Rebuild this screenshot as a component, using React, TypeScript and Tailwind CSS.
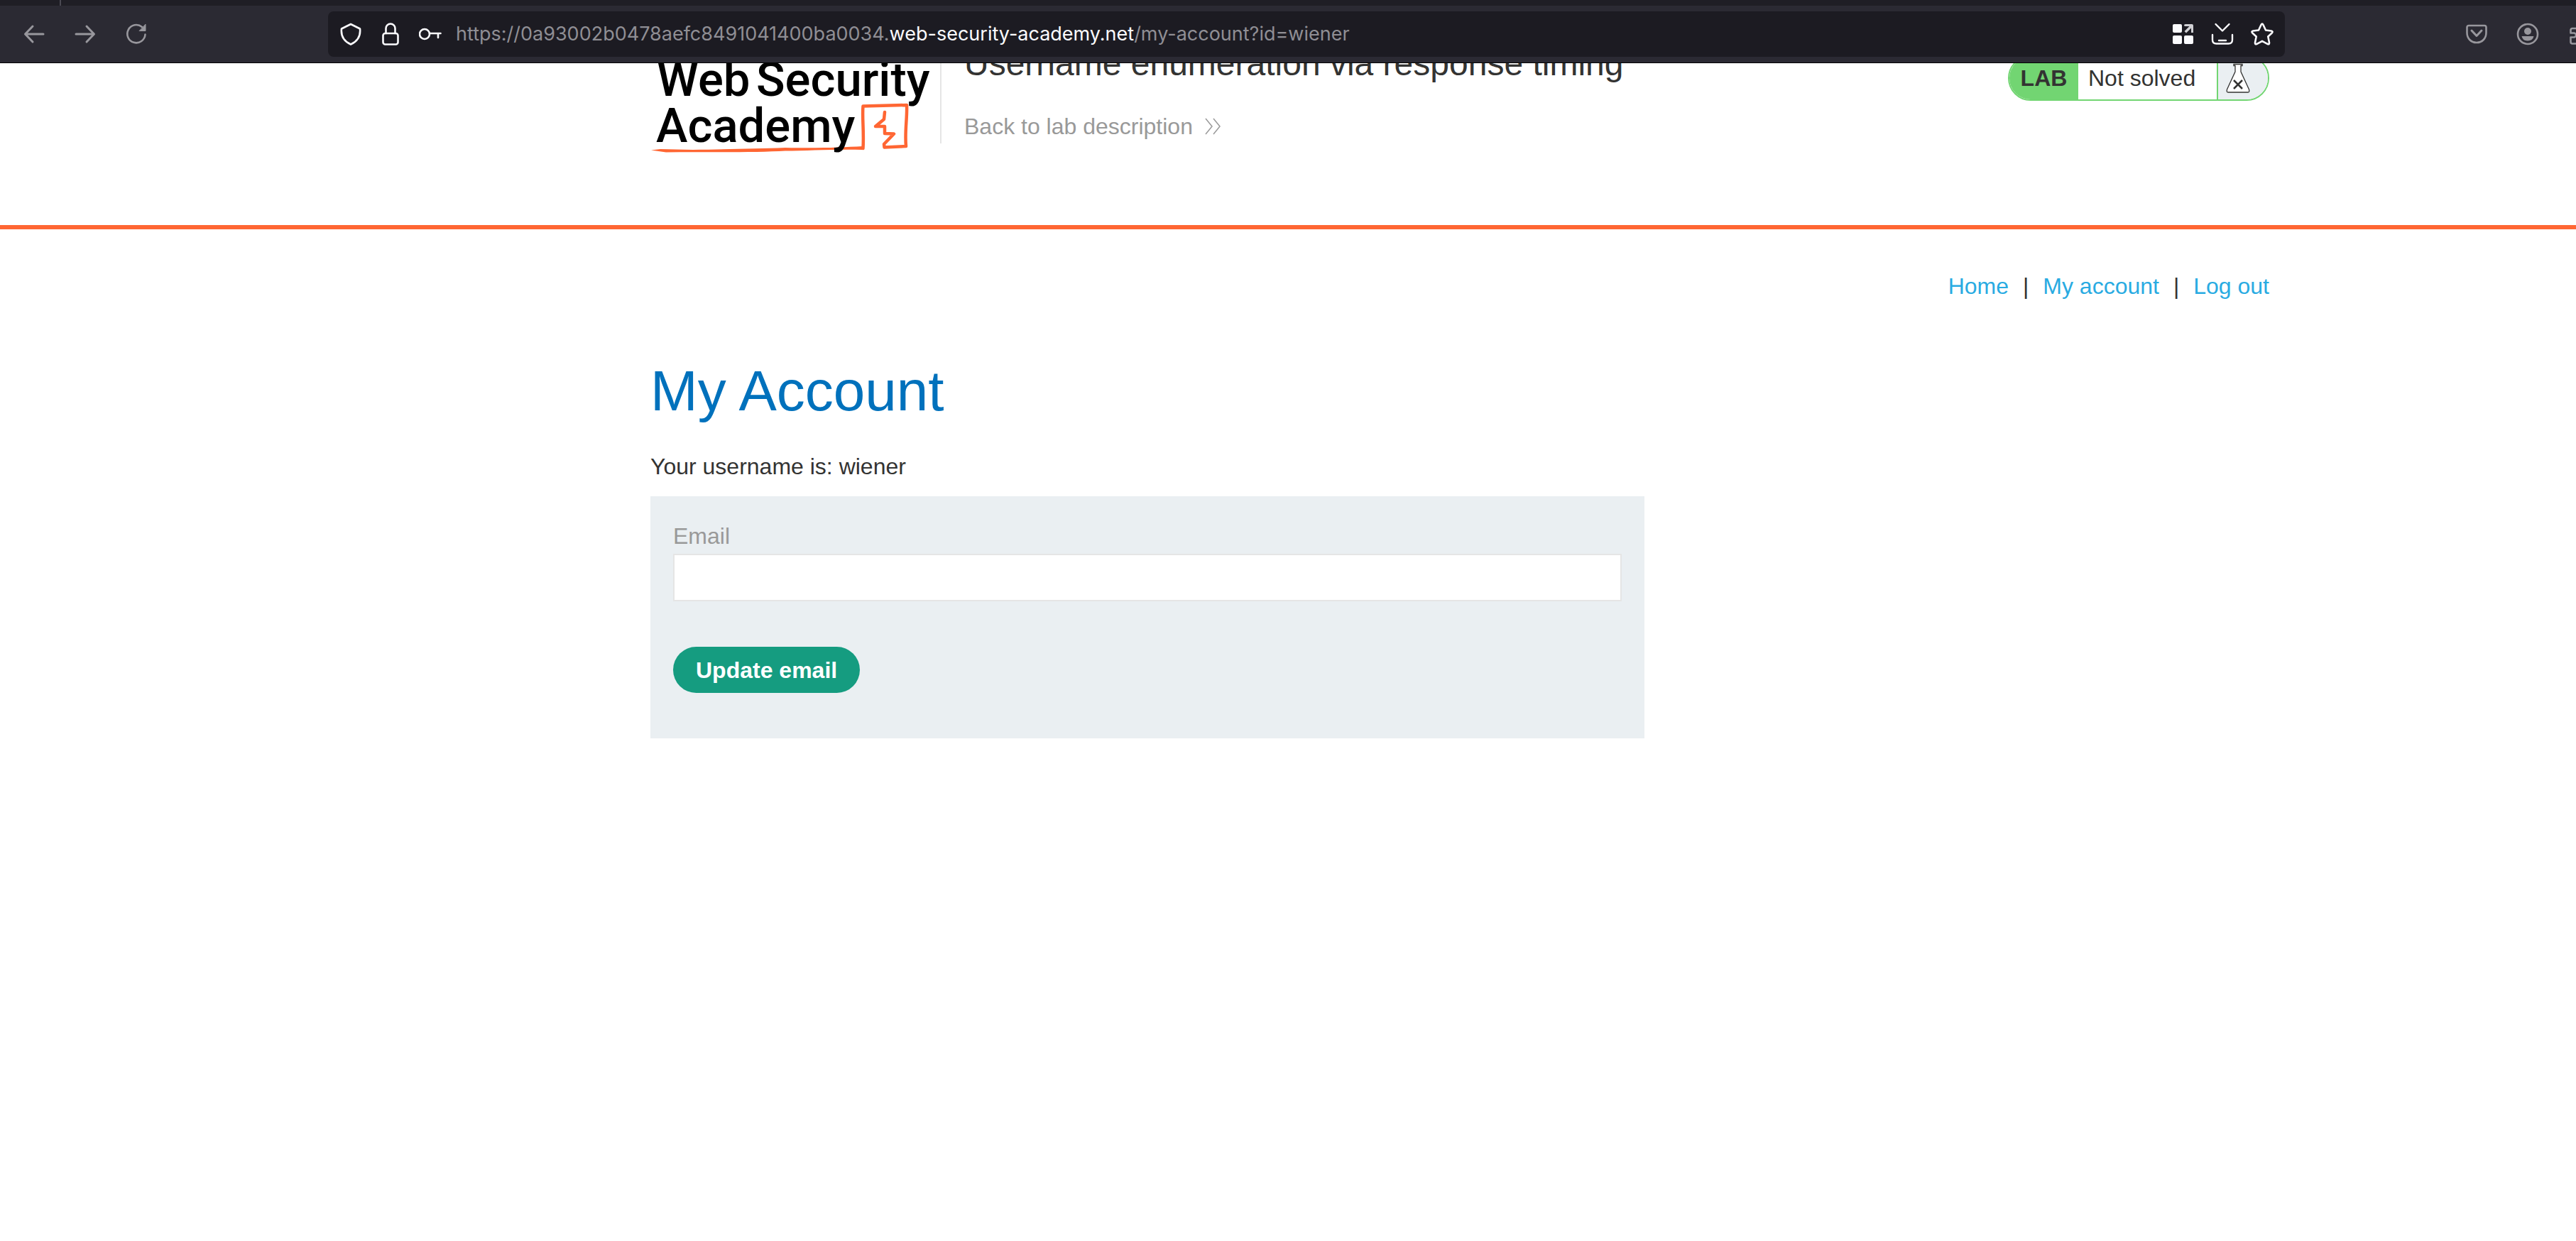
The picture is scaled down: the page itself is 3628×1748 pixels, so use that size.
import React from "react";

const ui = { fontFamily: '"Liberation Sans", Arial, sans-serif' };

function ToolButton({ label, children }: { label: string; children: React.ReactNode }) {
  return (
    <button type="button" aria-label={label} className="flex h-8 w-8 shrink-0 items-center justify-center">
      {children}
    </button>
  );
}

const line = { fill: "none", stroke: "currentColor", strokeLinecap: "round", strokeLinejoin: "round" } as const;

function BrowserBar() {
  return (
    <header className="shrink-0">
      <div className="flex h-2 bg-[#1f1e25]">
        <div className="ml-[84px] h-full w-[2px] bg-[#4a4952]" />
      </div>
      <div className="flex h-[81px] items-center border-b border-black bg-[#2b2a33] text-[#98979d]">
        <div className="flex w-[462px] shrink-0 items-center gap-10 pl-8">
          <ToolButton label="Back">
            <svg viewBox="0 0 32 32" className="h-8 w-8" {...line} strokeWidth="3">
              <path d="M29 16H4M14 5L3.500 16L14 27" />
            </svg>
          </ToolButton>
          <ToolButton label="Forward">
            <svg viewBox="0 0 32 32" className="h-8 w-8" {...line} strokeWidth="3">
              <path d="M3 16H28M18 5L28.500 16L18 27" />
            </svg>
          </ToolButton>
          <ToolButton label="Reload">
            <svg viewBox="0 0 32 32" className="h-8 w-8" {...line} strokeWidth="2.600">
              <path d="M28.500 16.500A12.600 12.600 0 1 1 24 6" />
              <path d="M29 2.500V11.500H20.500Z" fill="currentColor" strokeWidth="1" />
            </svg>
          </ToolButton>
        </div>
        <div className="flex h-16 flex-1 items-center rounded-lg bg-[#1c1b22] pr-4 pl-4 text-[#fbfbfe]">
          <div className="flex shrink-0 items-center gap-6">
            <ToolButton label="Tracking protection">
              <svg viewBox="0 0 32 32" className="h-8 w-8" {...line} strokeWidth="2.600">
                <path d="M16 2L29 8.500C30 18 26 26 16 30.500C6 26 2 18 3 8.500Z" />
              </svg>
            </ToolButton>
            <ToolButton label="Site security">
              <svg viewBox="0 0 32 32" className="h-8 w-8" {...line} strokeWidth="2.600">
                <rect x="5.500" y="15" width="21" height="15.500" rx="3" />
                <path d="M9.500 15V8A6.500 6.500 0 0 1 22.500 8V15" />
              </svg>
            </ToolButton>
            <ToolButton label="Saved password">
              <svg viewBox="0 0 32 32" className="h-8 w-8" {...line} strokeWidth="2.600">
                <circle cx="8" cy="16" r="7" />
                <path d="M15 15H30.500M27 15V21" />
              </svg>
            </ToolButton>
          </div>
          <p
            className="ml-5 flex-1 text-[27px] leading-10 whitespace-nowrap text-[#8f8e94]"
            style={{ fontFamily: "Inter, sans-serif" }}
          >
            https://0a93002b0478aefc8491041400ba0034.
            <span className="text-[#fbfbfe]">web-security-academy.net</span>
            /my-account?id=wiener
          </p>
          <div className="flex shrink-0 items-center gap-6">
            <ToolButton label="Add-ons">
              <svg viewBox="0 0 32 32" className="h-8 w-8" fill="currentColor">
                <rect x="2" y="2" width="13" height="12" rx="2" />
                <rect x="2" y="18" width="13" height="12" rx="2" />
                <rect x="18" y="18" width="13" height="12" rx="2" />
                <path d="M20 2H29Q31 2 31 4V14H28V7.500L21 14.500L18.500 12L25.500 5H20Q18 5 18 3.500Q18 2 20 2Z" fill="#d0d0d4" />
              </svg>
            </ToolButton>
            <ToolButton label="Save page">
              <svg viewBox="0 0 32 32" className="h-8 w-8" {...line} strokeWidth="2.400">
                <path d="M6.500 2L16 11.500L25.500 2M2 17V24Q2 29.500 7.500 29.500H24.500Q30 29.500 30 24V17M11 25H21" />
              </svg>
            </ToolButton>
            <ToolButton label="Bookmark">
              <svg viewBox="0 0 32 32" className="h-8 w-8" {...line} strokeWidth="2.600">
                <path d="M14.500 3Q16 0 17.500 3L21 10.500L28.800 11.500Q31.800 12 29.700 14.500L24.300 19.500L26 28Q26.300 31.200 23.300 29.800L16 25.800L8.700 29.800Q5.700 31.200 6 28L7.700 19.500L2.300 14.500Q0.200 12 3.200 11.500L11 10.500Z" />
              </svg>
            </ToolButton>
          </div>
        </div>
        <div className="flex w-[410px] shrink-0 items-center justify-end gap-10 overflow-hidden">
          <ToolButton label="Pocket">
            <svg viewBox="0 0 32 32" className="h-8 w-8" {...line} strokeWidth="2.600">
              <path d="M5 4H27Q29.500 4 29.500 6.500V14C29.500 22 24 28 16 28C8 28 2.500 22 2.500 14V6.500Q2.500 4 5 4Z" />
              <path d="M9 11L16 18.500L23 11" strokeWidth="3" />
            </svg>
          </ToolButton>
          <ToolButton label="Account">
            <svg viewBox="0 0 32 32" className="h-8 w-8" fill="currentColor">
              <circle cx="16" cy="16" r="14" fill="none" stroke="currentColor" strokeWidth="2.600" />
              <circle cx="16" cy="12" r="5" />
              <path d="M7.500 19H24.500Q23 25.500 16 25.500Q9 25.500 7.500 19Z" />
            </svg>
          </ToolButton>
          <button type="button" aria-label="Extensions" className="h-8 w-3 shrink-0 overflow-hidden">
            <svg viewBox="0 0 12 32" className="h-8 w-3" {...line} strokeWidth="2.600">
              <path d="M16 8H7Q4.500 8 4.500 10.500V14.500H9A3 3 0 0 1 9 20.500H4.500V27Q4.500 29.500 7 29.500H16" />
            </svg>
          </button>
        </div>
      </div>
    </header>
  );
}

function Logo() {
  return (
    <svg viewBox="0 0 408 140" className="h-[140px] w-[408px] shrink-0" role="img" aria-label="Web Security Academy">
      <path d="M1 131.500L14 130L60 131C110 130 150 129.500 190 128C240 129 270 127.500 299 126L301 130L298 131C260 130 220 132.500 190 132.500C150 135 80 134 22 134.500Z" fill="#ff6633" />
      <path d="M299.500 129C301 105 298 85 299.500 69.500L361 68C362 85 358 105 360 126L329.500 127.500L329 123L343 108.500L330 108L330 98L317 98L329 88L330 78" fill="none" stroke="#ff6633" strokeWidth="4.500" strokeLinejoin="round" strokeLinecap="round" />
      <g fontFamily="Roboto, sans-serif" fontWeight="500" fontSize="67" fill="#000">
        <text x="9" y="55">Web</text>
        <text x="149" y="55">Security</text>
        <text x="8" y="120">Academy</text>
      </g>
    </svg>
  );
}

function LabStatus() {
  return (
    <div className="flex h-16 overflow-hidden rounded-full border-2 border-[#72d572] text-[#333332]">
      <strong className="flex w-[97px] items-center justify-center bg-[#72d572]">LAB</strong>
      <span className="flex w-[195px] items-center pl-[14px]">Not solved</span>
      <span className="flex w-[72px] items-center border-l-2 border-[#72d572] bg-[#eaeff2] pl-[11px]">
        <svg viewBox="0 0 34 42" className="h-[42px] w-[34px]" fill="#fff" stroke="#333332" strokeWidth="1.300">
          <path d="M11 1.500H23V3.500H21V12L32.500 37Q33.500 41 31 41H3Q0.500 41 1.500 37L13 12V3.500H11Z" />
          <path d="M11 24L23 36M23 24L11 36" strokeWidth="2.500" />
        </svg>
      </span>
    </div>
  );
}

export default function App() {
  return (
    <div className="flex min-h-screen flex-col bg-white text-[32px] leading-10 text-[#333332]" style={ui}>
      <BrowserBar />
      <section className="h-[234px] overflow-hidden border-b-6 border-[#ff6633] pr-[432px] pl-[916px]">
        <div className="flex h-[113px] items-end">
          <div className="-mb-[18px]">
            <Logo />
          </div>
          <div className="flex h-[230px] flex-1 items-end justify-between border-l-2 border-[#e5e5e5] pl-8">
            <div className="flex flex-col gap-10">
              <h2 className="text-[48px] leading-14 whitespace-nowrap">Username enumeration via response timing</h2>
              <a href="#lab" className="mb-1 flex items-center gap-4 text-[#999]">
                Back to lab description
                <svg viewBox="0 0 24 24" className="h-6 w-6" fill="none" stroke="#999" strokeWidth="1.500">
                  <path d="M2 1L11 12L2 23M13 1L22 12L13 23" />
                </svg>
              </a>
            </div>
            <div className="mb-[60px]">
              <LabStatus />
            </div>
          </div>
        </div>
      </section>
      <main className="pr-[432px] pl-[916px]">
        <nav className="flex justify-end gap-5 pt-[60px]">
          <a href="#home" className="text-[#29abe2]">Home</a>
          <span>|</span>
          <a href="#account" className="text-[#29abe2]">My account</a>
          <span>|</span>
          <a href="#logout" className="text-[#29abe2]">Log out</a>
        </nav>
        <h1 className="mt-[78px] text-[80px] leading-[100px] text-[#0071bc]">My Account</h1>
        <p className="mt-9">Your username is: wiener</p>
        <form className="mt-[22px] w-[1400px] max-w-full bg-[#eaeff2] p-8 pb-16" onSubmit={(e) => e.preventDefault()}>
          <label htmlFor="email" className="mt-1 block text-[#999]">Email</label>
          <input id="email" type="email" className="mt-[5px] block h-[67px] w-full border-2 border-[#e5e5e5] bg-white px-4" />
          <button type="submit" className="mt-16 block h-[65px] rounded-full bg-[#159c80] px-8 font-bold text-white">
            Update email
          </button>
        </form>
      </main>
    </div>
  );
}
